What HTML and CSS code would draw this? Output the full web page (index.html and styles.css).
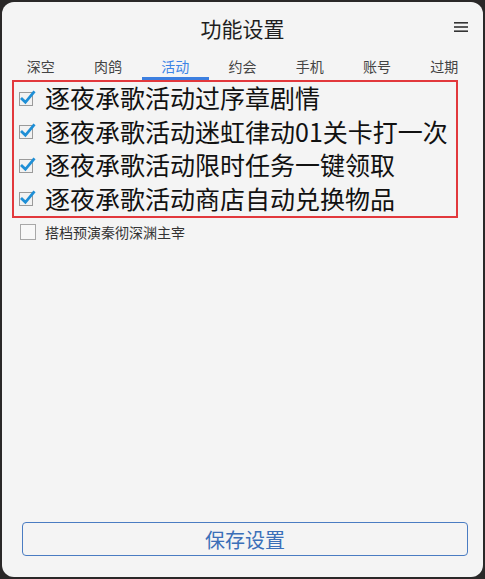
FILE: index.html
```html
<!DOCTYPE html>
<html lang="zh">
<head>
<meta charset="utf-8">
<title>功能设置</title>
<link rel="stylesheet" href="styles.css">
</head>
<body>
<div class="dialog">
  <div class="header">
    <div></div>
    <div class="title">功能设置</div>
    <div class="menu">
      <svg width="14" height="12" viewBox="0 0 14 12"><rect x="0" y="1" width="14" height="1.6" fill="#333"/><rect x="0" y="5.2" width="14" height="1.6" fill="#333"/><rect x="0" y="9.4" width="14" height="1.6" fill="#333"/></svg>
    </div>
  </div>
  <div class="tabs">
    <div class="tab">深空</div>
    <div class="tab">肉鸽</div>
    <div class="tab active">活动</div>
    <div class="tab">约会</div>
    <div class="tab">手机</div>
    <div class="tab">账号</div>
    <div class="tab">过期</div>
  </div>
  <div class="group">
    <div class="item"><span class="cb"><svg width="19" height="17" viewBox="0 0 19 17"><rect x="1.5" y="3.5" width="13" height="13" fill="#f2f2f2" stroke="#9a9a9a"/><path d="M4 10 L7.4 13.3 L15.6 3.4" fill="none" stroke="#1f8fd6" stroke-width="2.8" stroke-linecap="square"/></svg></span>逐夜承歌活动过序章剧情</div>
    <div class="item"><span class="cb"><svg width="19" height="17" viewBox="0 0 19 17"><rect x="1.5" y="3.5" width="13" height="13" fill="#f2f2f2" stroke="#9a9a9a"/><path d="M4 10 L7.4 13.3 L15.6 3.4" fill="none" stroke="#1f8fd6" stroke-width="2.8" stroke-linecap="square"/></svg></span>逐夜承歌活动迷虹律动01关卡打一次</div>
    <div class="item"><span class="cb"><svg width="19" height="17" viewBox="0 0 19 17"><rect x="1.5" y="3.5" width="13" height="13" fill="#f2f2f2" stroke="#9a9a9a"/><path d="M4 10 L7.4 13.3 L15.6 3.4" fill="none" stroke="#1f8fd6" stroke-width="2.8" stroke-linecap="square"/></svg></span>逐夜承歌活动限时任务一键领取</div>
    <div class="item"><span class="cb"><svg width="19" height="17" viewBox="0 0 19 17"><rect x="1.5" y="3.5" width="13" height="13" fill="#f2f2f2" stroke="#9a9a9a"/><path d="M4 10 L7.4 13.3 L15.6 3.4" fill="none" stroke="#1f8fd6" stroke-width="2.8" stroke-linecap="square"/></svg></span>逐夜承歌活动商店自动兑换物品</div>
  </div>
  <div class="plain">
    <span class="box"></span>搭档预演秦彻深渊主宰
  </div>
  <div class="footer">
    <div class="save">保存设置</div>
  </div>
</div>
</body>
</html>
```
FILE: styles.css
```css
html, body {
  margin: 0;
  padding: 0;
}
body {
  background: #2a2828;
  width: 485px;
  height: 579px;
  overflow: hidden;
  font-family: "Noto Sans CJK SC", "Noto Sans", sans-serif;
  color: #222;
}
.dialog {
  margin: 2px;
  height: 575px;
  width: 481px;
  background: #f4f4f4;
  border-radius: 12px;
  display: flex;
  flex-direction: column;
  box-sizing: border-box;
}
.header {
  height: 51px;
  display: grid;
  grid-template-columns: 1fr auto 1fr;
  align-items: center;
}
.title {
  font-size: 21px;
  color: #1e1e1e;
  line-height: 50px;
}
.menu {
  justify-self: end;
  padding-right: 15px;
  display: flex;
  padding-bottom: 2px;
}
.tabs {
  display: flex;
  padding: 0 5px;
  height: 27px;
}
.tab {
  flex: 1;
  text-align: center;
  font-size: 14px;
  color: #444;
  line-height: 22px;
  padding-top: 2px;
  border-bottom: 3px solid transparent;
  box-sizing: border-box;
}
.tab.active {
  color: #3c85e6;
  border-bottom-color: #3c7fe0;
}
.group {
  margin: 0 0 0 10px;
  width: 446px;
  border: 2px solid #e2383c;
  box-sizing: border-box;
  padding: 0;
}
.item {
  display: flex;
  align-items: center;
  height: 33.5px;
  box-sizing: border-box;
  padding-bottom: 3px;
  font-size: 25px;
  color: #111;
  white-space: nowrap;
}
.cb {
  display: flex;
  width: 31px;
  padding-left: 4px;
  box-sizing: border-box;
  margin-top: 0;
}
.plain {
  display: flex;
  align-items: center;
  height: 22px;
  margin-top: 3px;
  padding-left: 18px;
  font-size: 14px;
  color: #333;
}
.box {
  width: 14px;
  height: 14px;
  border: 1px solid #a8a8a8;
  background: #f8f8f8;
  margin-right: 9px;
}
.footer {
  margin-top: auto;
  padding: 0 15px 21px 20px;
}
.save {
  height: 34px;
  border: 1px solid #4a7cc2;
  border-radius: 4px;
  box-sizing: border-box;
  display: flex;
  align-items: center;
  justify-content: center;
  font-size: 20px;
  color: #3b6fb8;
}
```
